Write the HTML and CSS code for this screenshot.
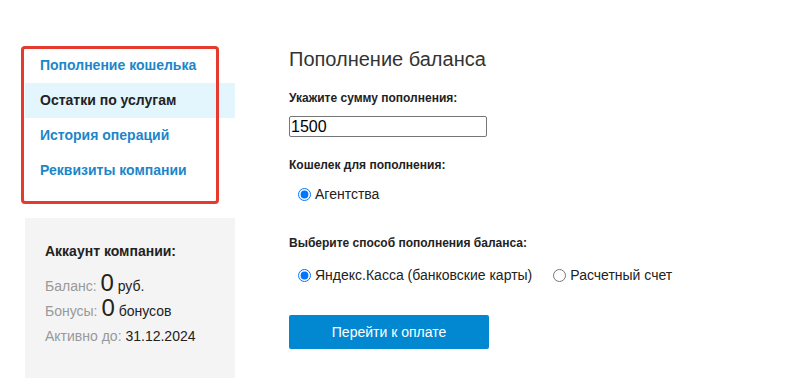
FILE: index.html
```html
<!DOCTYPE html>
<html>
<head>
    <title>Пополнение баланса</title>
    <link rel="stylesheet" href="styles.css">
</head>
<body>
    <div class="page">
        <div class="sidebar">
            <div class="menu">
                <a class="menu-item" href="#">Пополнение кошелька</a>
                <a class="menu-item active" href="#">Остатки по услугам</a>
                <a class="menu-item" href="#">История операций</a>
                <a class="menu-item" href="#">Реквизиты компании</a>
                <div class="highlight-box"></div>
            </div>
            <div class="account">
                <div class="account-title">Аккаунт компании:</div>
                <div class="account-line"><span class="muted">Баланс:</span> <span class="big">0</span> руб.</div>
                <div class="account-line"><span class="muted">Бонусы:</span> <span class="big">0</span> бонусов</div>
                <div class="account-line"><span class="muted">Активно до:</span> 31.12.2024</div>
            </div>
        </div>

        <div class="main">
            <h1>Пополнение баланса</h1>
            <div class="field-label first">Укажите сумму пополнения:</div>
            <input type="text" class="amount" value="1500">
            <div class="field-label wallet">Кошелек для пополнения:</div>
            <div class="radio-row first-row">
                <label><input type="radio" name="wallet" checked> Агентства</label>
            </div>
            <div class="field-label method">Выберите способ пополнения баланса:</div>
            <div class="radio-row second-row">
                <label><input type="radio" name="method" checked> Яндекс.Касса (банковские карты)</label>
                <label><input type="radio" name="method"> Расчетный счет</label>
            </div>
            <button class="pay-btn">Перейти к оплате</button>
        </div>
    </div>
</body>
</html>
```

FILE: styles.css
```css
body {
    font-family: "Liberation Sans", Arial, sans-serif;
    margin: 0;
    background-color: #fff;
    color: #222;
    overflow: hidden;
}
.page {
    display: flex;
    padding-left: 25px;
    gap: 54px;
}
.sidebar {
    width: 210px;
    flex-shrink: 0;
    padding-top: 48px;
}
.menu {
    position: relative;
    padding-bottom: 16px;
}
.menu-item {
    display: block;
    height: 35px;
    line-height: 35px;
    padding-left: 15px;
    font-size: 14px;
    font-weight: bold;
    color: #1c86c9;
    text-decoration: none;
}
.menu-item.active {
    background-color: #e4f6fd;
    color: #222;
}
.highlight-box {
    position: absolute;
    top: -2px;
    left: -4px;
    width: 192px;
    height: 152px;
    border: 3px solid #e53b2f;
    border-radius: 4px;
}
.account {
    margin-top: 14px;
    background-color: #f4f4f4;
    padding: 25px 20px 40px;
}
.account-title {
    font-size: 14px;
    font-weight: bold;
    line-height: 16px;
    margin-bottom: 15px;
}
.account-line {
    font-size: 14px;
    line-height: 25px;
    height: 25px;
}
.muted {
    color: #999;
}
.big {
    font-size: 24px;
    line-height: 14px;
}
.main {
    width: 420px;
}
h1 {
    font-size: 20px;
    font-weight: normal;
    line-height: 24px;
    color: #333;
    margin: 47px 0 0;
}
.field-label {
    font-size: 12px;
    font-weight: bold;
    line-height: 14px;
    color: #222;
}
.field-label.first {
    margin-top: 20px;
}
.field-label.wallet {
    margin-top: 21px;
}
.field-label.method {
    margin-top: 32px;
}
.amount {
    display: block;
    margin-top: 11px;
    width: 198px;
    height: 21px;
    box-sizing: border-box;
    padding: 0 1px;
    border: 1px solid #767676;
    border-radius: 2px;
    font-family: "Liberation Sans", Arial, sans-serif;
    font-size: 16px;
    color: #000;
}
.radio-row {
    display: flex;
    align-items: center;
    height: 20px;
    font-size: 14px;
    color: #222;
}
.radio-row label {
    display: flex;
    align-items: center;
    margin-right: 12px;
}
.radio-row input {
    margin: 0 4px 0 9px;
    width: 13px;
    height: 13px;
}
.first-row {
    margin-top: 12px;
}
.second-row {
    margin-top: 15px;
}
.pay-btn {
    display: block;
    margin-top: 30px;
    width: 200px;
    height: 34px;
    border: none;
    border-radius: 2px;
    background-color: #0288d1;
    color: #fff;
    font-family: "Liberation Sans", Arial, sans-serif;
    font-size: 14px;
    cursor: pointer;
}
```
